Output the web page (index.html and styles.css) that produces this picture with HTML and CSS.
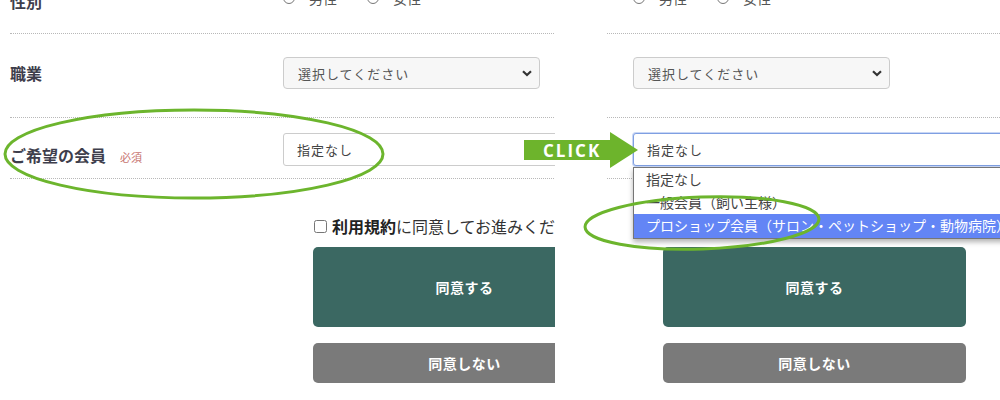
FILE: index.html
```html
<!DOCTYPE html>
<html lang="ja">

<head>
  <meta charset="UTF-8" />
  <meta name="viewport" content="width=device-width, initial-scale=1.0" />
  <link rel="stylesheet" href="styles.css">
  <title>会員登録</title>
</head>

<body>
  <div class="stage">

    <div class="panel panel-left">
      <form class="form">
        <div class="row row-sex">
          <div class="label">性別</div>
          <div class="field radios">
            <span class="radio"><span class="dot"></span>男性</span>
            <span class="radio"><span class="dot"></span>女性</span>
          </div>
        </div>

        <div class="row row-job">
          <div class="label">職業</div>
          <div class="field">
            <div class="select-wrap job">
              <select class="select">
                <option>選択してください</option>
              </select>
              <svg class="chevron" width="10" height="7" viewBox="0 0 10 7">
                <path d="M1 1.2 L5 5 L9 1.2" fill="none" stroke="#333" stroke-width="2.2" />
              </svg>
            </div>
          </div>
        </div>

        <div class="row row-member">
          <div class="label">ご希望の会員<span class="required">必須</span></div>
          <div class="field">
            <div class="select-wrap member">
              <select class="select plain">
                <option>指定なし</option>
              </select>
            </div>
          </div>
        </div>

        <div class="agree">
          <label class="check"><input type="checkbox" /><b>利用規約</b>に同意してお進みください</label>
          <button type="button" class="btn btn-ok">同意する</button>
          <button type="button" class="btn btn-ng">同意しない</button>
        </div>
      </form>
    </div>

    <div class="panel panel-right">
      <form class="form">
        <div class="row row-sex">
          <div class="label">性別</div>
          <div class="field radios">
            <span class="radio"><span class="dot"></span>男性</span>
            <span class="radio"><span class="dot"></span>女性</span>
          </div>
        </div>

        <div class="row row-job">
          <div class="label">職業</div>
          <div class="field">
            <div class="select-wrap job">
              <select class="select">
                <option>選択してください</option>
              </select>
              <svg class="chevron" width="10" height="7" viewBox="0 0 10 7">
                <path d="M1 1.2 L5 5 L9 1.2" fill="none" stroke="#333" stroke-width="2.2" />
              </svg>
            </div>
          </div>
        </div>

        <div class="row row-member">
          <div class="label">ご希望の会員<span class="required">必須</span></div>
          <div class="field">
            <div class="select-wrap member">
              <select class="select plain focus">
                <option>指定なし</option>
              </select>
              <ul class="dropdown">
                <li>指定なし</li>
                <li>一般会員（飼い主様）</li>
                <li class="active">プロショップ会員（サロン・ペットショップ・動物病院）</li>
              </ul>
            </div>
          </div>
        </div>

        <div class="agree">
          <label class="check"><input type="checkbox" /><b>利用規約</b>に同意してお進みください</label>
          <button type="button" class="btn btn-ok">同意する</button>
          <button type="button" class="btn btn-ng">同意しない</button>
        </div>
      </form>
    </div>

    <!-- annotations drawn over both shots -->
    <svg class="marks" width="1000" height="400" viewBox="0 0 1000 400">
      <ellipse cx="194" cy="154" rx="189" ry="44" fill="none" stroke="#6cb52d" stroke-width="3" />
      <ellipse cx="702" cy="223" rx="117" ry="26" fill="none" stroke="#6cb52d" stroke-width="3"
        transform="rotate(-2 702 223)" />
      <rect x="524" y="140" width="87" height="20" fill="#6db42c" />
      <polygon points="610,132 638,150 610,168" fill="#6db42c" />
      <text x="543" y="157" class="click">CLICK</text>
    </svg>

  </div>
</body>

</html>
```

FILE: styles.css
```css
* {
  margin: 0;
  padding: 0;
  box-sizing: border-box;
}

body {
  background-color: #fff;
  font-family: "Noto Sans CJK JP", "Noto Sans", sans-serif;
  color: #333;
  overflow: hidden;
}

.stage {
  position: relative;
  display: flex;
  width: 1000px;
  height: 400px;
  overflow: hidden;
}

.panel {
  height: 400px;
  overflow: hidden;
}

.panel-left {
  width: 555px;
  flex-shrink: 0;
}

.panel-right {
  flex: 1;
  margin-left: 52px;
}

.form {
  width: 760px;
  margin-left: 10px;
  flex-shrink: 0;
}

.panel-right .form {
  margin-left: -247px;
}

.row {
  display: grid;
  grid-template-columns: 273px 1fr;
  align-items: center;
  border-bottom: 1px dotted #b8b8b8;
}

.label {
  font-size: 16px;
  font-weight: bold;
  color: #3e3e4c;
  line-height: 24px;
}

.required {
  margin-left: 14px;
  font-size: 11px;
  font-weight: normal;
  color: #c77470;
}

.row-sex {
  height: 66px;
  margin-top: -32px;
}

.row-job {
  padding: 23px 0 28px;
}

.row-member {
  padding: 15px 0 12px;
}

.row-member .label {
  align-self: end;
  margin-bottom: -3px;
}

.radios {
  display: flex;
  gap: 30px;
  font-size: 14px;
  color: #555;
  margin-top: -5px;
}

.radio {
  display: flex;
  align-items: center;
  gap: 14px;
}

.dot {
  flex-shrink: 0;
  width: 12px;
  height: 12px;
  border: 1px solid #777;
  border-radius: 50%;
}

.select-wrap {
  position: relative;
}

.select-wrap.job {
  width: 257px;
}

.select-wrap.member {
  width: 430px;
}

.select {
  appearance: none;
  display: block;
  width: 100%;
  height: 32px;
  padding: 0 14px;
  font-family: "Noto Sans CJK JP", sans-serif;
  font-size: 13px;
  letter-spacing: 1px;
  color: #555;
  background-color: #f7f7f7;
  border: 1px solid #ccc;
  border-radius: 4px;
  outline: 0;
}

.select.plain {
  height: 33px;
  padding: 0 13px;
  color: #444;
  background-color: #fff;
  border-radius: 3px;
}

.select.focus {
  border: 1px solid #7f9fe2;
  box-shadow: 0 0 0 1px #c9d7f5;
}

.chevron {
  position: absolute;
  right: 8px;
  top: 13px;
}

.dropdown {
  position: absolute;
  top: 34px;
  left: 0;
  width: 100%;
  list-style: none;
  background-color: #fff;
  border: 1px solid #767676;
  box-shadow: 0 3px 5px rgba(0, 0, 0, 0.3);
  z-index: 2;
}

.dropdown li {
  height: 23px;
  line-height: 23px;
  padding-left: 12px;
  font-size: 14px;
  color: #444;
  white-space: nowrap;
}

.dropdown li.active {
  height: 24px;
  color: #fff;
  background-color: #6385f5;
}

.agree {
  width: 303px;
  margin-left: 303px;
}

.check {
  display: flex;
  align-items: center;
  height: 24px;
  margin-top: 35px;
  font-size: 16px;
  color: #333;
  white-space: nowrap;
}

.check input {
  width: 13px;
  height: 13px;
  margin: 0 5px 0 1px;
}

.check b {
  color: #222;
}

.btn {
  display: block;
  width: 303px;
  border: none;
  border-radius: 5px;
  color: #fff;
  font-family: "Noto Sans CJK JP", sans-serif;
  font-size: 14px;
  font-weight: bold;
  letter-spacing: 0.5px;
}

.btn-ok {
  height: 80px;
  margin-top: 9px;
  background-color: #3b6862;
}

.btn-ng {
  height: 40px;
  margin-top: 16px;
  background-color: #7a7a7a;
}

.marks {
  position: absolute;
  top: 0;
  left: 0;
  pointer-events: none;
  z-index: 5;
}

.click {
  font-family: "Open Sans", sans-serif;
  font-size: 17px;
  font-weight: 700;
  letter-spacing: 2px;
  fill: #fff;
}
```
